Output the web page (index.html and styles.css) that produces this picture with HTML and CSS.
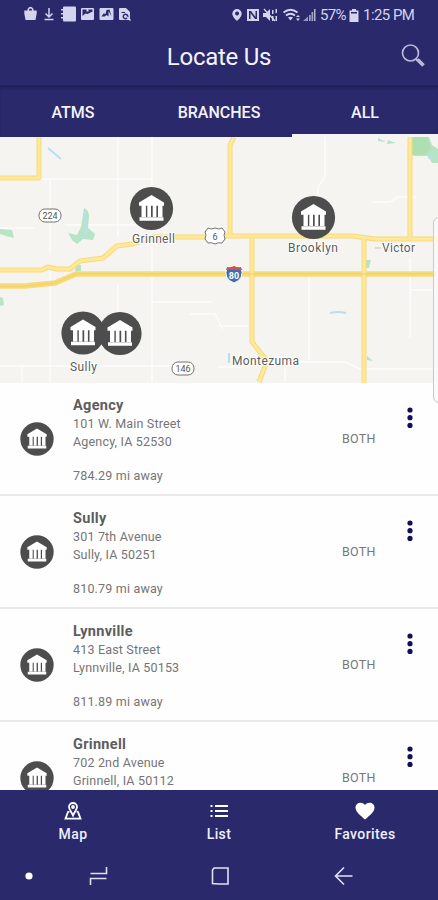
FILE: index.html
```html
<!DOCTYPE html>
<html lang="en">
<head>
<meta charset="utf-8">
<title>Locate Us</title>
<link rel="stylesheet" href="styles.css">
</head>
<body>
<svg class="defs" width="0" height="0" aria-hidden="true">
  <symbol id="bank" viewBox="0 0 44 44">
    <circle cx="22" cy="22" r="21.6" fill="#4d4d4d"/>
    <path fill="#fff" d="M22 8.500 34.500 16v3.200h-25V16zM12 19h4.400v11.500H12zM17.800 19h3.700v11.500h-3.700zM23.200 19h3.700v11.500h-3.700zM28.500 19h4.500v11.500h-4.500zM10 30.800h24v3.400H10z"/>
  </symbol>
  <symbol id="dots" viewBox="0 0 6 22">
    <g fill="#130f57"><circle cx="3" cy="3" r="2.600"/><circle cx="3" cy="10.700" r="2.600"/><circle cx="3" cy="18.400" r="2.600"/></g>
  </symbol>
</svg>
<div class="phone">
  <div class="status">
    <svg class="notices" viewBox="0 0 120 18" fill="#d5d4ee">
      <path d="M.3 5.500h12.400v3L11.500 15H1.500L.3 8.500zM3.500 6V4q3-4.500 6 0v2H8V4.500Q6.500 2.500 5 4.500V6z"/>
      <path d="M25 3v9M21.500 8.500 25 12l3.500-3.500M20.500 14.500h9" fill="none" stroke="#d5d4ee" stroke-width="1.500"/>
      <path d="M40 1.500h11q1 0 1 1v13q0 1-1 1H40q-1 0-1-1v-13q0-1 1-1zM37 4h2v1.500h-2zM37 8h2v1.500h-2zM37 12h2v1.500h-2z"/>
      <path fill-rule="evenodd" d="M58 3h11q1 0 1 1v10q0 1-1 1H58q-1 0-1-1V4q0-1 1-1zm.5 1.500V11l3-2.500 2 .5 5-2.500v-2h-4v2h-2v-2z"/>
      <path fill-rule="evenodd" d="M76.500 3h12q1 0 1 1v10q0 1-1 1h-12q-1 0-1-1V4q0-1 1-1zm1 8.500h3l2-1.500 2 1.500V6l3 5.500-2-7-3 .5-1 4-2-.5z"/>
      <path fill-rule="evenodd" d="M96 3h6l4 4v8H96q-1 0-1-1V4q0-1 1-1zm1.500 4v1H101V7zm4 1.500a3 3 0 1 0 .1 0zm0 1.500a1.500 1.500 0 1 1-.1 0z"/>
      <path d="m103 12 3.500 3.500" stroke="#d5d4ee" stroke-width="1.500"/>
    </svg>
    <div class="system">
      <svg class="signals" viewBox="0 0 88 18" fill="#d5d4ee">
        <path fill-rule="evenodd" d="M6 3a4.700 4.700 0 0 1 4.700 4.700C10.700 11 6 15 6 15S1.300 11 1.300 7.700A4.700 4.700 0 0 1 6 3zm0 2.500a2 2 0 1 0 .1 0z"/>
        <path fill-rule="evenodd" d="M16 3h12v12H16zm2 2v8h1.500V7l4.500 6h2V5h-1.500v6L20 5z"/>
        <path d="M32 7h3l4-4v12l-4-4h-3zM41 4h1.500v4H41zM41 10h1.500v5H41zM44.500 3H46v4h-1.500zM44.500 10H46v5h-1.500z"/>
        <path d="m33 3 11 12" stroke="#d5d4ee" stroke-width="1.300"/>
        <path d="M52.500 6.500q7-5.500 14 0M55 9.500q4.500-3.500 9 0" fill="none" stroke="#d5d4ee" stroke-width="2"/>
        <path d="m57 11.500 2.500 3 2.500-3q-2.500-1.500-5 0zM65 11l2-2 2 2zM65 12.500l2 2.500 2-2.500z"/>
        <path opacity=".65" d="M72 15 77 10.500V15z"/><path d="M78 9h1.700v6H78zM80.500 6h1.700v9h-1.700z" opacity=".7"/><path d="M83 3h1.500v12H83z" opacity=".8"/>
      </svg>
      <span class="pct">57%</span>
      <svg class="battery" viewBox="0 0 10 14" fill="#d5d4ee"><path fill-rule="evenodd" d="M3 1h4v1.500h2.500V14h-9V2.500H3zM2 4v1.500h6V4z"/></svg>
      <span class="clock">1:25 PM</span>
    </div>
  </div>
  <header class="bar">
    <h1>Locate Us</h1>
    <svg class="search" viewBox="0 0 26 26" fill="none" stroke="#bbb8d4"><circle cx="10.500" cy="10" r="8" stroke-width="1.700"/><path d="m16 16 2 2" stroke-width="2"/><path d="m17.500 16.500 6 6" stroke-width="3.700"/></svg>
  </header>
  <nav class="tabs"><div class="tab">ATMS</div><div class="tab">BRANCHES</div><div class="tab on">ALL</div></nav>
  <!-- The map's user units are screen pixels, starting at the lower edge of the tabs. -->
  <svg class="map" viewBox="0 137 438 246">
    <path fill="#f6f4f0" d="M0 137h438v246H0z"/>
    <g fill="none" stroke="#fdfcfb" stroke-width="1.500">
      <path d="M40 179h112V137M118 137v100M50 180v75M152 179v20M152 245v137M50 270v112M85 225h60M118 285v50M152 302h60M325 137v40l-7 10v10M372 202h18l8-5h18M309 275v85M218 326h30M410 258v80M410 290h25M218 367h25M270 362h75l15 7h78M0 366h180M22 366v16M190 314h25l8 15M0 228h35M65 225h20M285 362v20"/>
    </g>
    <g fill="#b7e4c4">
      <path d="M84 208q5 2 5 9l-1 11 7 6-2 6-10-1-6 5-5-4-4-7 9 2 4-8zM0 229l12 1 2 8-8-2-6-2zM76 265h5v6h-6zM0 297l3 1 1 7-4 1zM366 260h5l-2 8h-4zM367 356l6 5-6-1zM378 138l8 4-8-1zM388 140l8 3-9 1z"/>
      <path d="M411 137h18l3 8 6 4v14h-6l-4-7h-14l-7-6 4-3z"/>
      <path fill="#addfb2" d="M412 137h16l3 12-6 6h-13z"/>
    </g>
    <path d="m85 212 1 18-3 8M48 148l13 11M330 313q8-2 16 0M229 353v10M428 158l6-2" fill="none" stroke="#b8def0" stroke-width="2"/>
    <g fill="none" stroke="#f6da78" stroke-width="5" stroke-linejoin="round">
      <path d="M39 137v41H0M234 137l-4 8v91M0 270h42l6-3 8 2h14l10-8 23-3 14-12 15-2 22-7h65M217 236h136l22 3h63M410 137v102"/>
      <path d="M252 238v104l15 19-8 21" stroke-linejoin="miter"/>
      <path d="M364 238v145"/>
      <path d="M0 286h25l30-3 21-9h362" stroke-width="5.500"/>
    </g>
    <g fill="none" stroke="#ffe899" stroke-width="3">
      <path d="M39 137v41H0M234 137l-4 8v91M0 270h42l6-3 8 2h14l10-8 23-3 14-12 15-2 22-7h65M217 236h136l22 3h63M410 137v102M252 238v104l15 19-8 21M364 238v145"/>
    </g>
    <path d="M0 286h25l30-3 21-9h362" fill="none" stroke="#f4cf6c" stroke-width="1"/>
    <g fill="#fff" stroke="#737373" stroke-width="1">
      <rect x="39" y="209" width="22" height="13" rx="6"/>
      <rect x="172" y="362" width="22" height="13" rx="6"/>
      <path d="M208 228q3 2 7 0 4 2 7 0l3 4q-2 3 0 7l-3 4q-4-1-7 1-3-2-7-1l-3-4q2-4 0-7z"/>
    </g>
    <path d="M227 267q3 1 7-1 4 2 7 1 4 12-7 16-11-4-7-16z" fill="#3f6eb0" stroke="#fff" stroke-width="1"/>
    <path d="M227 267q3 1 7-1 4 2 7 1l1 3h-16z" fill="#d5504c"/>
    <g class="shields">
      <text x="50" y="219">224</text><text x="183" y="372">146</text><text x="215" y="239.500">6</text><text class="inter" x="234" y="278.500">80</text>
    </g>
    <g class="towns">
      <text x="132" y="243" textLength="43">Grinnell</text>
      <text x="288" y="252" textLength="50">Brooklyn</text>
      <text x="382" y="252" textLength="33">Victor</text>
      <text x="70" y="370.500" textLength="27">Sully</text>
      <text x="232" y="365" textLength="67">Montezuma</text>
    </g>
    <path d="M375 248h6" stroke="#b8c4cc"/>
    <use href="#bank" x="129.500" y="186.500" width="44" height="44"/>
    <use href="#bank" x="291.500" y="195.500" width="44" height="44"/>
    <use href="#bank" x="98" y="311.500" width="44" height="44"/>
    <use href="#bank" x="61" y="311" width="44" height="44"/>
  </svg>
  <main class="list">
    <article class="row"><svg class="pin"><use href="#bank"/></svg><div class="info"><h2>Agency</h2><p>101 W. Main Street</p><p>Agency, IA 52530</p><p class="away">784.29 mi away</p></div><span class="kind">BOTH</span><svg class="more"><use href="#dots"/></svg></article>
    <article class="row"><svg class="pin"><use href="#bank"/></svg><div class="info"><h2>Sully</h2><p>301 7th Avenue</p><p>Sully, IA 50251</p><p class="away">810.79 mi away</p></div><span class="kind">BOTH</span><svg class="more"><use href="#dots"/></svg></article>
    <article class="row"><svg class="pin"><use href="#bank"/></svg><div class="info"><h2>Lynnville</h2><p>413 East Street</p><p>Lynnville, IA 50153</p><p class="away">811.89 mi away</p></div><span class="kind">BOTH</span><svg class="more"><use href="#dots"/></svg></article>
    <article class="row"><svg class="pin"><use href="#bank"/></svg><div class="info"><h2>Grinnell</h2><p>702 2nd Avenue</p><p>Grinnell, IA 50112</p></div><span class="kind">BOTH</span><svg class="more"><use href="#dots"/></svg></article>
  </main>
  <nav class="bottom">
    <div class="item"><svg viewBox="0 0 20 20" fill="none" stroke="#fff" stroke-width="1.800"><path d="M6.500 10.500 5 11l-2.500 6.700h15L15 11l-1.500-.5"/><path d="M10 14.500C8.500 11 6 8.500 6 6a4 4 0 0 1 8 0c0 2.500-2.500 5-4 8.500z"/><circle cx="10" cy="6" r="1"/></svg>Map</div>
    <div class="item"><svg viewBox="0 0 20 20" fill="#fff"><path d="M1.500 4h2v2h-2zM1.500 9h2v2h-2zM1.500 14h2v2h-2zM6 4h13v2H6zM6 9h13v2H6zM6 14h13v2H6z"/></svg>List</div>
    <div class="item"><svg viewBox="0 0 20 20" fill="#fff"><path d="M10 18.500C5 14 .5 11 .5 6.500.500 1.500 7 0 10 4c3-4 9.500-2.500 9.500 2.500C19.500 11 15 14 10 18.500z"/></svg>Favorites</div>
  </nav>
  <div class="keys">
    <svg class="dot" viewBox="0 0 8 8"><circle cx="4" cy="4" r="3.600" fill="#fff"/></svg>
    <svg class="key recent" viewBox="0 0 20 20"><path d="M1.500 7.500h16V1M1.500 19v-6.500h16"/></svg>
    <svg class="key home" viewBox="0 0 20 20"><path d="M4 2h14v16H8.500l-6-.500V4z"/></svg>
    <svg class="key back" viewBox="0 0 20 20"><path d="M18.500 10h-16M10 1.500 1.500 10l8.500 8.500"/></svg>
  </div>
  <div class="edge"></div>
</div>
</body>
</html>
```
FILE: styles.css
```css
* { box-sizing: border-box; margin: 0; padding: 0; }
body { width: 438px; height: 900px; overflow: hidden; font-family: Roboto, sans-serif; background: #fff; }
svg { display: block; flex: none; }
.defs { position: absolute; }
.phone { position: relative; width: 438px; height: 900px; display: flex; flex-direction: column; overflow: hidden; }
.status { height: 28px; flex: none; background: #29296b; color: #d5d4ee; display: flex; justify-content: space-between; align-items: flex-start; padding: 5px 24px 0 24px; }
.notices { width: 120px; height: 18px; }
.system { display: flex; align-items: center; height: 19px; font-size: 15px; white-space: nowrap; }
.signals { width: 88px; height: 18px; }
.pct { width: 26px; margin-left: 1px; letter-spacing: -.7px; }
.battery { width: 10px; height: 14px; margin: 0 4px 0 3px; }
.clock { width: 51px; letter-spacing: -.55px; }
.bar { height: 58px; flex: none; background: #29296b; display: grid; grid-template-columns: 1fr 26px; align-items: center; padding: 0 12px 0 0; border-bottom: 1px solid #242361; }
.bar h1 { color: #f4f3fc; font-size: 24px; font-weight: 400; letter-spacing: -.25px; text-align: center; padding-left: 38px; }
.search { width: 26px; height: 26px; margin-top: -1px; }
.tabs { height: 51px; flex: none; background: #29296b; box-shadow: inset 0 3px 3px -1px #20205b; display: grid; grid-template-columns: 1fr 1fr 1fr; color: #f4f3fc; font-size: 16px; font-weight: 500; }
.tab { display: flex; align-items: center; justify-content: center; padding-top: 4px; border-bottom: 3px solid transparent; }
.tab.on { border-color: #f4f3fa; }
.map { width: 438px; height: 246px; }
.towns { font-size: 12px; fill: #5c5c5c; stroke: #fff; stroke-width: 2px; paint-order: stroke; }
.shields { font-size: 9px; fill: #555; text-anchor: middle; }
.inter { fill: #fff; font-weight: 700; }
.list { height: 407px; flex: none; overflow: hidden; background: #fefefe; }
.row { height: 113px; display: grid; grid-template-columns: 34px 1fr 59px 18px; border-bottom: 2px solid #e9e9e9; padding: 13px 19px 0 20px; }
.pin { width: 34px; height: 34px; margin-top: 26px; }
.info { padding-left: 19px; color: #757575; }
.info h2 { font-size: 14.5px; line-height: 19px; font-weight: 700; letter-spacing: .3px; color: #5d5d5d; }
.info p { font-size: 12.5px; line-height: 17.5px; letter-spacing: .18px; white-space: nowrap; }
.info .away { margin-top: 17px; }
.kind { font-size: 12.5px; line-height: 18px; letter-spacing: .3px; color: #777; margin-top: 34px; }
.more { width: 6px; height: 22px; margin: 11px 0 0 6px; }
.bottom { height: 60px; flex: none; background: #29296b; display: grid; grid-template-columns: 1fr 1fr 1fr; color: #f0effa; font-size: 14px; font-weight: 500; letter-spacing: .4px; }
.item { display: flex; flex-direction: column; align-items: center; gap: 4px; padding-top: 11px; line-height: 18px; }
.item svg { width: 20px; height: 20px; }
.keys { height: 50px; flex: none; background: #29296b; display: flex; align-items: center; padding: 2px 0 0 25px; }
.dot { width: 8px; height: 8px; }
.key { width: 20px; height: 20px; fill: none; stroke: #e2e1f2; stroke-width: 1.6; }
.recent { margin-left: 56px; }
.home { margin-left: 101px; }
.back { margin-left: 104px; }
.edge { position: absolute; left: 433px; top: 217px; width: 12px; height: 186px; border: 1px solid #c9c9c9; border-radius: 6px; background: rgba(250,250,250,.9); }
```
